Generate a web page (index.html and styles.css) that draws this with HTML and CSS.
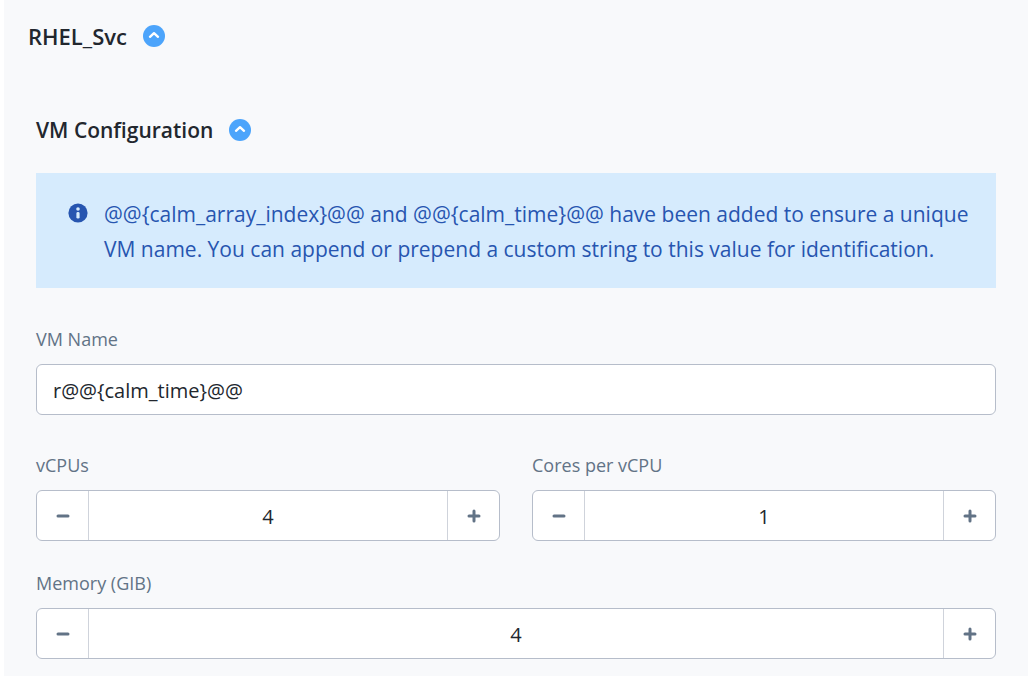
FILE: index.html
```html
<!DOCTYPE html>
<html lang="en">
<head>
<meta charset="utf-8">
<title>RHEL_Svc</title>
<link rel="stylesheet" href="styles.css">
</head>
<body>
<main class="panel">
  <header class="heading">
    <h1 class="title title-large">RHEL_Svc</h1>
    <button class="toggle" type="button" aria-label="Collapse RHEL_Svc">
      <svg viewBox="0 0 22 22"><circle cx="11" cy="11" r="11"/><path d="M7 11.8l4-3.6 4 3.6"/></svg>
    </button>
  </header>
  <section class="section">
    <div class="heading">
      <h2 class="title">VM Configuration</h2>
      <button class="toggle" type="button" aria-label="Collapse VM Configuration">
        <svg viewBox="0 0 22 22"><circle cx="11" cy="11" r="11"/><path d="M7 11.8l4-3.6 4 3.6"/></svg>
      </button>
    </div>
    <div class="alert">
      <svg class="info" viewBox="0 0 20 20"><circle cx="10" cy="10" r="9.6"/><circle class="mark" cx="10" cy="6" r="1.8"/><rect class="mark" x="8.4" y="9" width="3.2" height="6.6" rx="1.4"/></svg>
      <p class="message">@@{calm_array_index}@@ and @@{calm_time}@@ have been added to ensure a unique VM name. You can append or prepend a custom string to this value for identification.</p>
    </div>
    <div class="field name-field">
      <label class="label" for="name">VM Name</label>
      <input class="text" id="name" type="text" value="r@@{calm_time}@@">
    </div>
    <div class="row">
      <div class="field">
        <label class="label" for="vcpus">vCPUs</label>
        <div class="stepper">
          <button class="step" type="button" aria-label="Decrease vCPUs"><svg viewBox="0 0 14 14"><path d="M2 7h10"/></svg></button>
          <input class="number" id="vcpus" type="text" inputmode="numeric" value="4">
          <button class="step" type="button" aria-label="Increase vCPUs"><svg viewBox="0 0 14 14"><path d="M2 7h10M7 2v10"/></svg></button>
        </div>
      </div>
      <div class="field">
        <label class="label" for="cores">Cores per vCPU</label>
        <div class="stepper">
          <button class="step" type="button" aria-label="Decrease cores per vCPU"><svg viewBox="0 0 14 14"><path d="M2 7h10"/></svg></button>
          <input class="number" id="cores" type="text" inputmode="numeric" value="1">
          <button class="step" type="button" aria-label="Increase cores per vCPU"><svg viewBox="0 0 14 14"><path d="M2 7h10M7 2v10"/></svg></button>
        </div>
      </div>
    </div>
    <div class="field">
      <label class="label" for="memory">Memory (GIB)</label>
      <div class="stepper">
        <button class="step" type="button" aria-label="Decrease memory"><svg viewBox="0 0 14 14"><path d="M2 7h10"/></svg></button>
        <input class="number" id="memory" type="text" inputmode="numeric" value="4">
        <button class="step" type="button" aria-label="Increase memory"><svg viewBox="0 0 14 14"><path d="M2 7h10M7 2v10"/></svg></button>
      </div>
    </div>
  </section>
</main>
</body>
</html>
```
FILE: styles.css
```css
* { box-sizing: border-box; }
body {
  margin: 0;
  background: #fff;
  color: #22272e;
  font-family: "Open Sans", "Noto Sans", sans-serif;
  font-size: 20px;
}
button, input { font: inherit; color: inherit; }
.panel {
  min-height: 100vh;
  margin: 0 1px 0 4px;
  padding: 21px 24px 16px;
  background: #f8f9fb;
}
.section { padding: 0 8px; margin-top: 64px; }
.heading { display: flex; align-items: center; gap: 16px; }
.title { margin: 0; font-size: 21px; font-weight: 600; line-height: 30px; }
.title-large { font-size: 22px; }
.toggle {
  width: 22px;
  height: 22px;
  padding: 0;
  border: 0;
  background: none;
  cursor: pointer;
}
.toggle svg { display: block; fill: #4ca4fb; }
.toggle path {
  fill: none;
  stroke: #fff;
  stroke-width: 2.4;
  stroke-linecap: round;
  stroke-linejoin: round;
}
.alert {
  display: flex;
  gap: 16px;
  margin: 28px 0 36px;
  padding: 24px 16px 21px 32px;
  background: #d6ebfd;
  color: #2755b0;
}
.info { flex: none; width: 20px; height: 20px; margin-top: 6px; fill: #2755b0; }
.info .mark { fill: #d6ebfd; }
.message { margin: 0; font-size: 21px; font-weight: 500; line-height: 35px; }
.label {
  display: block;
  margin-bottom: 10px;
  color: #627386;
  font-size: 18px;
  font-weight: 500;
  line-height: 30px;
}
.text {
  display: block;
  width: 100%;
  height: 51px;
  padding: 2px 16px 0;
  border: 1px solid #b6bdca;
  border-radius: 6px;
  background: #fff;
}
.name-field { margin-bottom: 35px; }
.row {
  display: grid;
  grid-template-columns: 1fr 1fr;
  gap: 32px;
  margin-bottom: 27px;
}
.stepper {
  display: flex;
  height: 51px;
  border: 1px solid #b6bdca;
  border-radius: 6px;
  background: #fff;
  overflow: hidden;
}
.step {
  display: grid;
  place-items: center;
  flex: none;
  width: 51px;
  padding: 0;
  border: 0;
  background: none;
  cursor: pointer;
}
.step svg { width: 14px; height: 14px; }
.step path { fill: none; stroke: #627386; stroke-width: 3; stroke-linecap: round; }
.number {
  flex: 1;
  min-width: 0;
  padding: 2px 0 0;
  border: solid #cfd3db;
  border-width: 0 1px;
  background: none;
  text-align: center;
}
```
